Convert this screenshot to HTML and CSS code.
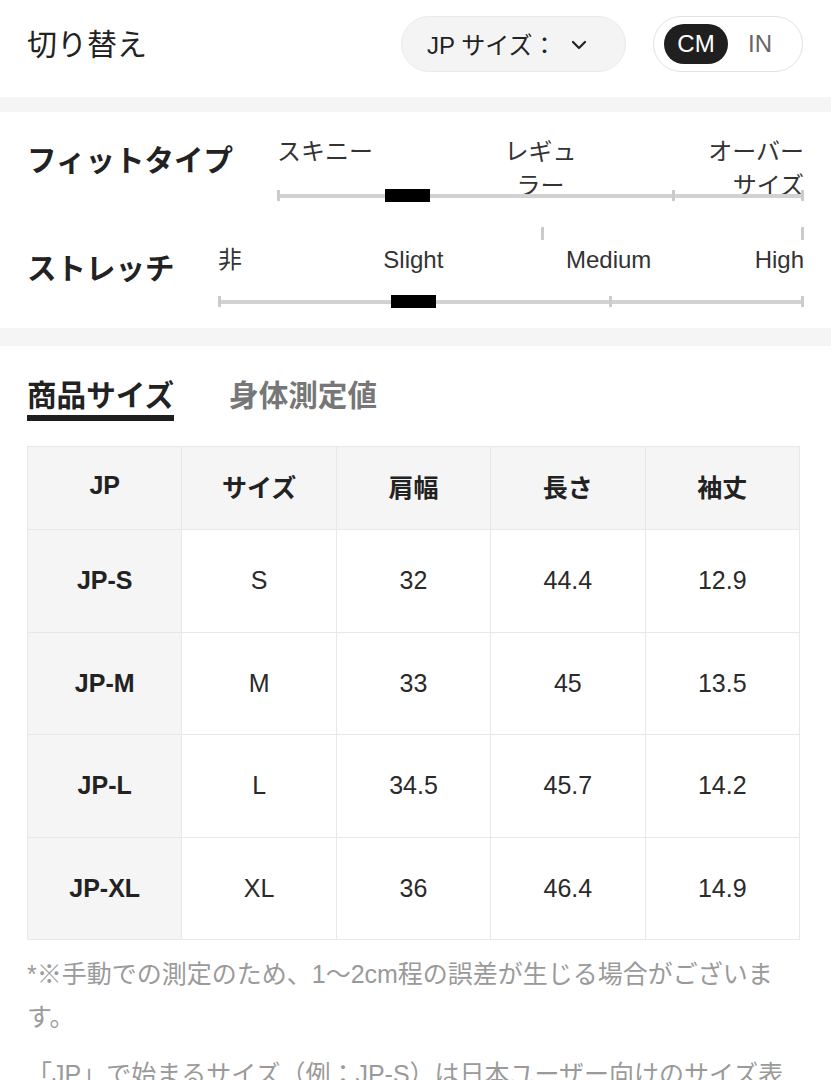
FILE: index.html
```html
<!DOCTYPE html>
<html lang="ja">
<head>
<meta charset="utf-8">
<title>サイズ</title>
<link rel="stylesheet" href="styles.css">
</head>
<body>
<div class="page">
  <header class="topbar">
    <div class="topbar-title">切り替え</div>
    <div class="topbar-controls">
      <div class="size-select">
        <span class="size-select-text">JP サイズ：</span>
        <svg class="chevron" width="16" height="10" viewBox="0 0 16 10"><path d="M2 2 L8 8 L14 2" fill="none" stroke="#222" stroke-width="2.2" stroke-linecap="round" stroke-linejoin="round"/></svg>
      </div>
      <div class="unit-toggle">
        <span class="unit-on">CM</span>
        <span class="unit-off">IN</span>
      </div>
    </div>
  </header>

  <div class="band band-a"></div>

  <section class="fit">
    <div class="fit-row fit-row-type">
      <div class="fit-label fit-label-type">フィットタイプ</div>
      <div class="slider">
        <div class="labels labels-3">
          <span class="lab lab-start">スキニー</span>
          <span class="lab lab-mid">レギュラー</span>
          <span class="lab lab-end">オーバーサイズ</span>
        </div>
        <div class="track track-type">
          <span class="tick" style="left:0%"></span>
          <span class="tick" style="left:75%"></span>
          <span class="tick tick-end"></span>
          <span class="marker" style="left:20.5%"></span>
        </div>
        <div class="extra-ticks">
          <span class="tick" style="left:50%"></span>
          <span class="tick tick-end"></span>
        </div>
      </div>
    </div>

    <div class="fit-row fit-row-stretch">
      <div class="fit-label fit-label-stretch">ストレッチ</div>
      <div class="slider">
        <div class="labels labels-4">
          <span class="lab lab-start">非</span>
          <span class="lab lab-c1">Slight</span>
          <span class="lab lab-c2">Medium</span>
          <span class="lab lab-end">High</span>
        </div>
        <div class="track track-stretch">
          <span class="tick" style="left:0%"></span>
          <span class="tick" style="left:66.8%"></span>
          <span class="tick tick-end"></span>
          <span class="marker" style="left:29.5%"></span>
        </div>
      </div>
    </div>
  </section>

  <div class="band band-b"></div>

  <section class="sizes">
    <nav class="tabs">
      <div class="tab tab-active">商品サイズ</div>
      <div class="tab">身体測定値</div>
    </nav>

    <table class="size-table">
      <thead>
        <tr><th>JP</th><th>サイズ</th><th>肩幅</th><th>長さ</th><th>袖丈</th></tr>
      </thead>
      <tbody>
        <tr><th>JP-S</th><td>S</td><td>32</td><td>44.4</td><td>12.9</td></tr>
        <tr><th>JP-M</th><td>M</td><td>33</td><td>45</td><td>13.5</td></tr>
        <tr><th>JP-L</th><td>L</td><td>34.5</td><td>45.7</td><td>14.2</td></tr>
        <tr><th>JP-XL</th><td>XL</td><td>36</td><td>46.4</td><td>14.9</td></tr>
      </tbody>
    </table>

    <p class="note">*※手動での測定のため、1～2cm程の誤差が生じる場合がございます。</p>
    <p class="note">「JP」で始まるサイズ（例：JP-S）は日本ユーザー向けのサイズ表記です。</p>
  </section>
</div>
</body>
</html>
```

FILE: styles.css
```css
html, body {
  margin: 0;
  padding: 0;
  background: #ffffff;
}

body {
  font-family: "Liberation Sans", "Noto Sans CJK JP", sans-serif;
  color: #222;
}

.page {
  width: 831px;
  overflow: hidden;
}

/* top bar */
.topbar {
  height: 97px;
  padding: 0 28px 0 27px;
  display: flex;
  align-items: center;
  justify-content: space-between;
  box-sizing: border-box;
}

.topbar-title {
  font-size: 30px;
  line-height: 40px;
  color: #222;
  margin-top: -8px;
}

.topbar-controls {
  display: flex;
  align-items: center;
  gap: 27px;
  margin-top: -10px;
}

.size-select {
  width: 225px;
  height: 56px;
  box-sizing: border-box;
  background: #f4f4f4;
  border: 1px solid #ebebeb;
  border-radius: 28px;
  display: flex;
  align-items: center;
  padding-left: 25px;
}

.size-select-text {
  font-size: 24px;
  color: #222;
  white-space: nowrap;
}

.chevron {
  margin-left: 14px;
  margin-top: 2px;
}

.unit-toggle {
  width: 150px;
  height: 56px;
  box-sizing: border-box;
  border: 1px solid #e2e2e2;
  border-radius: 28px;
  display: flex;
  align-items: center;
  padding-left: 10px;
  background: #fff;
}

.unit-on {
  width: 64px;
  height: 40px;
  border-radius: 20px;
  background: #1f1f1f;
  color: #fff;
  font-size: 24px;
  display: flex;
  align-items: center;
  justify-content: center;
}

.unit-off {
  margin-left: 20px;
  font-size: 24px;
  color: #666;
}

/* bands */
.band {
  background: #f5f5f5;
}
.band-a { height: 15px; }
.band-b { height: 18px; }

/* fit section */
.fit {
  padding: 23px 27px 20px 27px;
  display: flex;
  flex-direction: column;
}

.fit-row {
  display: flex;
  align-items: flex-start;
}

.fit-label {
  flex: none;
  font-size: 29.5px;
  font-weight: bold;
  line-height: 34px;
  color: #222;
}

.fit-label-type {
  width: 250px;
  padding-top: 9px;
}

.fit-label-stretch {
  width: 191px;
  padding-top: 12px;
}

.slider {
  flex: 1;
  display: flex;
  flex-direction: column;
}

.labels {
  display: grid;
  font-size: 24px;
  line-height: 34px;
  color: #333;
  line-break: strict;
}

.labels-3 {
  grid-template-columns: repeat(4, 1fr);
}

.labels-4 {
  grid-template-columns: repeat(6, 1fr);
  margin-top: 3px;
}

.lab-start {
  grid-column: 1;
  justify-self: start;
  white-space: nowrap;
}

.labels-3 .lab-mid {
  grid-column: 2 / span 2;
  justify-self: center;
  text-align: center;
  max-width: 80px;
}

.labels-3 .lab-end {
  grid-column: 4;
  justify-self: end;
  text-align: right;
  max-width: 104px;
}

.labels-4 .lab-c1 {
  grid-column: 2 / span 2;
  justify-self: center;
  white-space: nowrap;
}

.labels-4 .lab-c2 {
  grid-column: 4 / span 2;
  justify-self: center;
  white-space: nowrap;
}

.labels-4 .lab-end {
  grid-column: 6;
  justify-self: end;
  white-space: nowrap;
}

.track {
  position: relative;
  height: 13px;
}

.track::before {
  content: "";
  position: absolute;
  left: 0;
  right: 0;
  top: 5px;
  height: 4px;
  background: #d2d2d2;
}

.track-type {
  margin-top: -14px;
}

.track-stretch {
  margin-top: 18px;
}

.tick {
  position: absolute;
  top: 1px;
  width: 3px;
  height: 11px;
  background: #cbcbcb;
}

.tick-end {
  right: 0;
}

.marker {
  position: absolute;
  top: 0;
  width: 45px;
  height: 13px;
  background: #000;
}

.extra-ticks {
  position: relative;
  height: 13px;
  margin-top: 25px;
}

.extra-ticks .tick {
  top: 0;
  height: 13px;
}

/* sizes */
.sizes {
  padding: 32px 31px 0 27px;
}

.tabs {
  display: flex;
  gap: 55px;
}

.tab {
  font-size: 29.6px;
  font-weight: bold;
  line-height: 36px;
  color: #777;
  padding-bottom: 1px;
}

.tab-active {
  color: #222;
  border-bottom: 6px solid #1f1f1f;
}

.size-table {
  margin-top: 25px;
  width: 773px;
  table-layout: fixed;
  border-collapse: collapse;
  font-size: 25px;
  color: #222;
}

.size-table th,
.size-table td {
  border: 1.5px solid #e8e8e8;
  text-align: center;
  vertical-align: middle;
  padding: 0;
}

.size-table thead th {
  height: 83px;
  background: #f5f5f5;
  font-weight: bold;
  padding-bottom: 5px;
  box-sizing: border-box;
}

.size-table tbody th {
  background: #f5f5f5;
  font-weight: bold;
}

.size-table tbody td {
  background: #fff;
  font-weight: normal;
  color: #2a2a2a;
}

.size-table tbody tr {
  height: 102.5px;
}

.note {
  margin: 13px 0 0 0;
  font-size: 25px;
  line-height: 43px;
  color: #9a9a9a;
  width: 773px;
}

.note + .note {
  margin-top: 14px;
}
```
